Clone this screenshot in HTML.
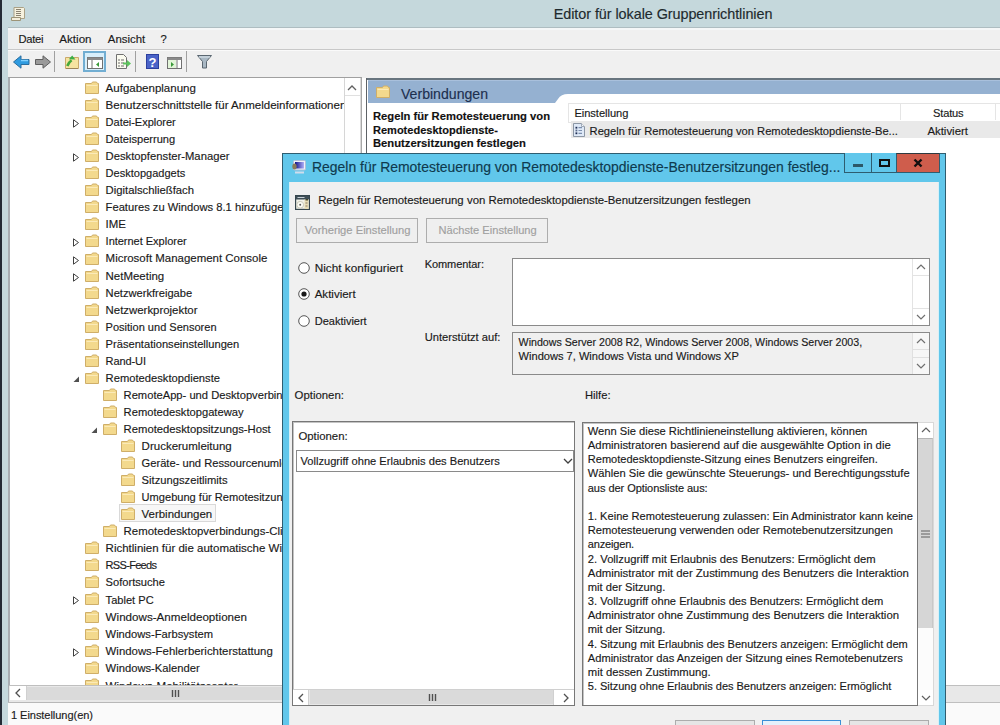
<!DOCTYPE html>
<html><head><meta charset="utf-8"><style>
html,body{margin:0;padding:0;width:1000px;height:725px;overflow:hidden;position:relative;font-family:"Liberation Sans",sans-serif}
.t{position:absolute;white-space:nowrap;-webkit-text-stroke:0.15px currentColor}
svg{display:block}
</style></head><body>
<div style="position:absolute;left:0px;top:0px;width:1000px;height:725px;background:#c5d8dc"></div>
<div style="position:absolute;left:0px;top:0px;width:2px;height:725px;background:#242a35"></div>
<div style="position:absolute;left:2px;top:0px;width:6px;height:725px;background:#c5d8dd"></div>
<svg style="position:absolute;left:11px;top:7px;" width="14" height="14" viewBox="0 0 14 14"><path d="M3 0.5H12.5L13.5 1.5V11.5H3Z" fill="#f6f1de" stroke="#aaa186" stroke-width="1"/><path d="M5 2.5h5M5 4.5h5M5 6.5h5M5 8.5h5" stroke="#8a8270" stroke-width="1"/><path d="M0.5 10.5H9.5V13.5H0.5Z" fill="#f3eddb" stroke="#9c9478" stroke-width="1"/></svg>
<div class="t" style="left:553.75px;top:7.00px;font-size:14.4px;line-height:14.4px;color:#1e2a2e;font-weight:normal;letter-spacing:-0.060px;">Editor für lokale Gruppenrichtlinien</div>
<div style="position:absolute;left:8px;top:27px;width:992px;height:698px;background:#f0f0f0"></div>
<div style="position:absolute;left:8px;top:27px;width:992px;height:1px;background:#aebdc1"></div>
<div style="position:absolute;left:8px;top:28px;width:992px;height:2px;background:#f5f7f8"></div>
<div class="t" style="left:18.50px;top:34.00px;font-size:11.23px;line-height:11.23px;color:#1a1a1a;font-weight:normal;letter-spacing:-0.303px;">Datei</div>
<div class="t" style="left:59.30px;top:33.00px;font-size:11.62px;line-height:11.62px;color:#1a1a1a;font-weight:normal;letter-spacing:0.001px;">Aktion</div>
<div class="t" style="left:107.80px;top:34.00px;font-size:11.41px;line-height:11.41px;color:#1a1a1a;font-weight:normal;letter-spacing:-0.002px;">Ansicht</div>
<div class="t" style="left:160.50px;top:34.00px;font-size:11.23px;line-height:11.23px;color:#1a1a1a;font-weight:normal;letter-spacing:-0.745px;">?</div>
<div style="position:absolute;left:8px;top:49px;width:992px;height:1px;background:#c8c8c8"></div>
<div style="position:absolute;left:8px;top:50px;width:992px;height:1px;background:#fafafa"></div>
<svg style="position:absolute;left:13px;top:55px;" width="17" height="14" viewBox="0 0 17 14"><path d="M0.5 7L8 0.8V4.5H16V9.5H8V13.2Z" fill="#2f9be0" stroke="#2a6d9e" stroke-width="1"/><path d="M8 5.5H15" stroke="#7fd0ff" stroke-width="1.5"/></svg>
<svg style="position:absolute;left:35px;top:55px;" width="16" height="14" viewBox="0 0 16 14"><path d="M15.5 7L8 0.8V4.5H0.5V9.5H8V13.2Z" fill="#9a9a9a" stroke="#5f5f5f" stroke-width="1"/></svg>
<div style="position:absolute;left:54px;top:51px;width:1px;height:21px;background:#a0a0a0"></div>
<svg style="position:absolute;left:65px;top:55px;" width="14" height="14" viewBox="0 0 14 14"><path d="M0.5 2.5h13v11h-13z" fill="#f6e3a0" stroke="#c9a96a"/><path d="M1 13.5h12" stroke="#9c8458"/><path d="M2.3 11C3.2 8.3 4.6 6.6 6.6 5.2" stroke="#45a83a" stroke-width="2.6" fill="none"/><path d="M3.8 4.2L7.2 0.4L10.4 4.6Z" fill="#3cae46"/></svg>
<div style="position:absolute;left:83px;top:51px;width:23px;height:21px;background:#d8effb;border:2px solid #72aed2;box-sizing:border-box"></div>
<svg style="position:absolute;left:87px;top:57px;" width="16" height="12" viewBox="0 0 16 12"><rect x="0.5" y="0.5" width="15" height="11" fill="#fff" stroke="#707070"/><rect x="0.5" y="0.5" width="15" height="2.5" fill="#8a8a8a"/><path d="M5 3v8.5" stroke="#707070"/><path d="M12 5L9 7.5L12 10Z" fill="#3a9a3a"/></svg>
<svg style="position:absolute;left:116px;top:54px;" width="16" height="15" viewBox="0 0 16 15"><path d="M0.5 0.5h7l3 3v11h-10z" fill="#fbfbf0" stroke="#707070"/><path d="M2 6h2M5 6h3M2 9h2M5 9h3M2 12h2M5 12h3" stroke="#6a6a6a" stroke-width="1.2"/><path d="M7 8.5h4V6l4 3.5-4 3.5v-2.5H7z" fill="#5cc45c"/></svg>
<div style="position:absolute;left:135px;top:51px;width:1px;height:21px;background:#a0a0a0"></div>
<svg style="position:absolute;left:146px;top:54px;" width="13" height="15" viewBox="0 0 13 15"><rect x="0" y="0" width="13" height="15" fill="#2b3f9e"/><rect x="1" y="1" width="11" height="13" fill="#4a63c8"/><text x="6.5" y="12.5" font-family="Liberation Sans" font-weight="bold" font-size="13" fill="#fff" text-anchor="middle">?</text></svg>
<svg style="position:absolute;left:167px;top:57px;" width="15" height="12" viewBox="0 0 15 12"><rect x="0.5" y="0.5" width="14" height="11" fill="#fff" stroke="#707070"/><rect x="0.5" y="0.5" width="14" height="2.5" fill="#8a8a8a"/><rect x="1" y="3" width="8" height="8" fill="#e2f5d8"/><path d="M10 3v8.5" stroke="#707070"/><path d="M4 5L7 7.5L4 10Z" fill="#3a9a3a"/></svg>
<div style="position:absolute;left:186px;top:51px;width:1px;height:21px;background:#a0a0a0"></div>
<svg style="position:absolute;left:197px;top:55px;" width="15" height="14" viewBox="0 0 15 14"><path d="M0.5 0.5h14l-5 6v6.5h-4V6.5z" fill="#a9b8c4" stroke="#5a6670"/><path d="M2 2h11" stroke="#dde7ee"/></svg>
<div style="position:absolute;left:8px;top:77px;width:354px;height:626px;background:#fff;border-top:1px solid #a0a0a0;border-left:2px solid #a9adb3;border-right:1px solid #a8a8a8;box-sizing:border-box"></div>
<div style="position:absolute;left:360px;top:78px;width:1px;height:607px;background:#dadada"></div>
<div style="position:absolute;left:362px;top:78px;width:4px;height:625px;background:#fff"></div>
<div style="position:absolute;left:9px;top:78px;width:335px;height:607px;overflow:hidden">
<svg style="position:absolute;left:76px;top:3px;" width="14" height="13" viewBox="0 0 14 13"><path d="M0.5 2.5h6l1-1.5h4l1 1.5h1v10h-13z" fill="#f3d98d" stroke="#cfae68" stroke-width="1"/><path d="M1.5 4.5h11" stroke="#fbeab8" stroke-width="1"/></svg>
<div class="t" style="left:96.60px;top:5.00px;font-size:11.52px;line-height:11.52px;color:#1a1a1a;font-weight:normal;letter-spacing:-0.001px;">Aufgabenplanung</div>
<svg style="position:absolute;left:76px;top:20px;" width="14" height="13" viewBox="0 0 14 13"><path d="M0.5 2.5h6l1-1.5h4l1 1.5h1v10h-13z" fill="#f3d98d" stroke="#cfae68" stroke-width="1"/><path d="M1.5 4.5h11" stroke="#fbeab8" stroke-width="1"/></svg>
<div class="t" style="left:96.60px;top:22.00px;font-size:11.53px;line-height:11.53px;color:#1a1a1a;font-weight:normal;letter-spacing:0.001px;">Benutzerschnittstelle für Anmeldeinformationen</div>
<svg style="position:absolute;left:76px;top:37px;" width="14" height="13" viewBox="0 0 14 13"><path d="M0.5 2.5h6l1-1.5h4l1 1.5h1v10h-13z" fill="#f3d98d" stroke="#cfae68" stroke-width="1"/><path d="M1.5 4.5h11" stroke="#fbeab8" stroke-width="1"/></svg>
<svg style="position:absolute;left:64px;top:41px;" width="7" height="9" viewBox="0 0 7 9"><path d="M0.5 0.8L5.5 4.5L0.5 8.2Z" fill="#fff" stroke="#404040" stroke-width="1"/></svg>
<div class="t" style="left:96.60px;top:39.00px;font-size:11.04px;line-height:11.04px;color:#1a1a1a;font-weight:normal;letter-spacing:-0.032px;">Datei-Explorer</div>
<svg style="position:absolute;left:76px;top:54px;" width="14" height="13" viewBox="0 0 14 13"><path d="M0.5 2.5h6l1-1.5h4l1 1.5h1v10h-13z" fill="#f3d98d" stroke="#cfae68" stroke-width="1"/><path d="M1.5 4.5h11" stroke="#fbeab8" stroke-width="1"/></svg>
<div class="t" style="left:96.60px;top:56.00px;font-size:11.08px;line-height:11.08px;color:#1a1a1a;font-weight:normal;letter-spacing:0.001px;">Dateisperrung</div>
<svg style="position:absolute;left:76px;top:71px;" width="14" height="13" viewBox="0 0 14 13"><path d="M0.5 2.5h6l1-1.5h4l1 1.5h1v10h-13z" fill="#f3d98d" stroke="#cfae68" stroke-width="1"/><path d="M1.5 4.5h11" stroke="#fbeab8" stroke-width="1"/></svg>
<svg style="position:absolute;left:64px;top:75px;" width="7" height="9" viewBox="0 0 7 9"><path d="M0.5 0.8L5.5 4.5L0.5 8.2Z" fill="#fff" stroke="#404040" stroke-width="1"/></svg>
<div class="t" style="left:96.60px;top:73.00px;font-size:11.25px;line-height:11.25px;color:#1a1a1a;font-weight:normal;letter-spacing:-0.000px;">Desktopfenster-Manager</div>
<svg style="position:absolute;left:76px;top:88px;" width="14" height="13" viewBox="0 0 14 13"><path d="M0.5 2.5h6l1-1.5h4l1 1.5h1v10h-13z" fill="#f3d98d" stroke="#cfae68" stroke-width="1"/><path d="M1.5 4.5h11" stroke="#fbeab8" stroke-width="1"/></svg>
<div class="t" style="left:96.60px;top:90.00px;font-size:11.04px;line-height:11.04px;color:#1a1a1a;font-weight:normal;letter-spacing:0.001px;">Desktopgadgets</div>
<svg style="position:absolute;left:76px;top:105px;" width="14" height="13" viewBox="0 0 14 13"><path d="M0.5 2.5h6l1-1.5h4l1 1.5h1v10h-13z" fill="#f3d98d" stroke="#cfae68" stroke-width="1"/><path d="M1.5 4.5h11" stroke="#fbeab8" stroke-width="1"/></svg>
<div class="t" style="left:96.60px;top:107.00px;font-size:11.29px;line-height:11.29px;color:#1a1a1a;font-weight:normal;letter-spacing:0.002px;">Digitalschließfach</div>
<svg style="position:absolute;left:76px;top:122px;" width="14" height="13" viewBox="0 0 14 13"><path d="M0.5 2.5h6l1-1.5h4l1 1.5h1v10h-13z" fill="#f3d98d" stroke="#cfae68" stroke-width="1"/><path d="M1.5 4.5h11" stroke="#fbeab8" stroke-width="1"/></svg>
<div class="t" style="left:96.60px;top:124.00px;font-size:11.2px;line-height:11.2px;color:#1a1a1a;font-weight:normal;letter-spacing:0.000px;">Features zu Windows 8.1 hinzufügen</div>
<svg style="position:absolute;left:76px;top:139px;" width="14" height="13" viewBox="0 0 14 13"><path d="M0.5 2.5h6l1-1.5h4l1 1.5h1v10h-13z" fill="#f3d98d" stroke="#cfae68" stroke-width="1"/><path d="M1.5 4.5h11" stroke="#fbeab8" stroke-width="1"/></svg>
<div class="t" style="left:96.60px;top:141.00px;font-size:11.45px;line-height:11.45px;color:#1a1a1a;font-weight:normal;">IME</div>
<svg style="position:absolute;left:76px;top:156px;" width="14" height="13" viewBox="0 0 14 13"><path d="M0.5 2.5h6l1-1.5h4l1 1.5h1v10h-13z" fill="#f3d98d" stroke="#cfae68" stroke-width="1"/><path d="M1.5 4.5h11" stroke="#fbeab8" stroke-width="1"/></svg>
<svg style="position:absolute;left:64px;top:160px;" width="7" height="9" viewBox="0 0 7 9"><path d="M0.5 0.8L5.5 4.5L0.5 8.2Z" fill="#fff" stroke="#404040" stroke-width="1"/></svg>
<div class="t" style="left:96.60px;top:158.00px;font-size:11.04px;line-height:11.04px;color:#1a1a1a;font-weight:normal;letter-spacing:-0.030px;">Internet Explorer</div>
<svg style="position:absolute;left:76px;top:174px;" width="14" height="13" viewBox="0 0 14 13"><path d="M0.5 2.5h6l1-1.5h4l1 1.5h1v10h-13z" fill="#f3d98d" stroke="#cfae68" stroke-width="1"/><path d="M1.5 4.5h11" stroke="#fbeab8" stroke-width="1"/></svg>
<svg style="position:absolute;left:64px;top:178px;" width="7" height="9" viewBox="0 0 7 9"><path d="M0.5 0.8L5.5 4.5L0.5 8.2Z" fill="#fff" stroke="#404040" stroke-width="1"/></svg>
<div class="t" style="left:96.60px;top:175.00px;font-size:11.46px;line-height:11.46px;color:#1a1a1a;font-weight:normal;letter-spacing:0.001px;">Microsoft Management Console</div>
<svg style="position:absolute;left:76px;top:191px;" width="14" height="13" viewBox="0 0 14 13"><path d="M0.5 2.5h6l1-1.5h4l1 1.5h1v10h-13z" fill="#f3d98d" stroke="#cfae68" stroke-width="1"/><path d="M1.5 4.5h11" stroke="#fbeab8" stroke-width="1"/></svg>
<svg style="position:absolute;left:64px;top:195px;" width="7" height="9" viewBox="0 0 7 9"><path d="M0.5 0.8L5.5 4.5L0.5 8.2Z" fill="#fff" stroke="#404040" stroke-width="1"/></svg>
<div class="t" style="left:96.60px;top:193.00px;font-size:11.46px;line-height:11.46px;color:#1a1a1a;font-weight:normal;letter-spacing:0.000px;">NetMeeting</div>
<svg style="position:absolute;left:76px;top:208px;" width="14" height="13" viewBox="0 0 14 13"><path d="M0.5 2.5h6l1-1.5h4l1 1.5h1v10h-13z" fill="#f3d98d" stroke="#cfae68" stroke-width="1"/><path d="M1.5 4.5h11" stroke="#fbeab8" stroke-width="1"/></svg>
<div class="t" style="left:96.60px;top:210.00px;font-size:11.13px;line-height:11.13px;color:#1a1a1a;font-weight:normal;letter-spacing:-0.000px;">Netzwerkfreigabe</div>
<svg style="position:absolute;left:76px;top:225px;" width="14" height="13" viewBox="0 0 14 13"><path d="M0.5 2.5h6l1-1.5h4l1 1.5h1v10h-13z" fill="#f3d98d" stroke="#cfae68" stroke-width="1"/><path d="M1.5 4.5h11" stroke="#fbeab8" stroke-width="1"/></svg>
<div class="t" style="left:96.60px;top:227.00px;font-size:11.41px;line-height:11.41px;color:#1a1a1a;font-weight:normal;letter-spacing:-0.002px;">Netzwerkprojektor</div>
<svg style="position:absolute;left:76px;top:242px;" width="14" height="13" viewBox="0 0 14 13"><path d="M0.5 2.5h6l1-1.5h4l1 1.5h1v10h-13z" fill="#f3d98d" stroke="#cfae68" stroke-width="1"/><path d="M1.5 4.5h11" stroke="#fbeab8" stroke-width="1"/></svg>
<div class="t" style="left:96.60px;top:244.00px;font-size:11.04px;line-height:11.04px;color:#1a1a1a;font-weight:normal;letter-spacing:-0.004px;">Position und Sensoren</div>
<svg style="position:absolute;left:76px;top:259px;" width="14" height="13" viewBox="0 0 14 13"><path d="M0.5 2.5h6l1-1.5h4l1 1.5h1v10h-13z" fill="#f3d98d" stroke="#cfae68" stroke-width="1"/><path d="M1.5 4.5h11" stroke="#fbeab8" stroke-width="1"/></svg>
<div class="t" style="left:96.60px;top:261.00px;font-size:11.14px;line-height:11.14px;color:#1a1a1a;font-weight:normal;letter-spacing:0.001px;">Präsentationseinstellungen</div>
<svg style="position:absolute;left:76px;top:276px;" width="14" height="13" viewBox="0 0 14 13"><path d="M0.5 2.5h6l1-1.5h4l1 1.5h1v10h-13z" fill="#f3d98d" stroke="#cfae68" stroke-width="1"/><path d="M1.5 4.5h11" stroke="#fbeab8" stroke-width="1"/></svg>
<div class="t" style="left:96.60px;top:278.00px;font-size:11.04px;line-height:11.04px;color:#1a1a1a;font-weight:normal;letter-spacing:-0.115px;">Rand-UI</div>
<svg style="position:absolute;left:76px;top:293px;" width="14" height="13" viewBox="0 0 14 13"><path d="M0.5 2.5h6l1-1.5h4l1 1.5h1v10h-13z" fill="#f3d98d" stroke="#cfae68" stroke-width="1"/><path d="M1.5 4.5h11" stroke="#fbeab8" stroke-width="1"/></svg>
<svg style="position:absolute;left:64px;top:298px;" width="7" height="7" viewBox="0 0 7 7"><path d="M6 0.5V6H0.5Z" fill="#505050"/></svg>
<div class="t" style="left:96.60px;top:295.00px;font-size:11.19px;line-height:11.19px;color:#1a1a1a;font-weight:normal;letter-spacing:-0.002px;">Remotedesktopdienste</div>
<svg style="position:absolute;left:94px;top:310px;" width="14" height="13" viewBox="0 0 14 13"><path d="M0.5 2.5h6l1-1.5h4l1 1.5h1v10h-13z" fill="#f3d98d" stroke="#cfae68" stroke-width="1"/><path d="M1.5 4.5h11" stroke="#fbeab8" stroke-width="1"/></svg>
<div class="t" style="left:114.60px;top:312.00px;font-size:11.18px;line-height:11.18px;color:#1a1a1a;font-weight:normal;letter-spacing:-0.001px;">RemoteApp- und Desktopverbindungen</div>
<svg style="position:absolute;left:94px;top:327px;" width="14" height="13" viewBox="0 0 14 13"><path d="M0.5 2.5h6l1-1.5h4l1 1.5h1v10h-13z" fill="#f3d98d" stroke="#cfae68" stroke-width="1"/><path d="M1.5 4.5h11" stroke="#fbeab8" stroke-width="1"/></svg>
<div class="t" style="left:114.60px;top:329.00px;font-size:11.19px;line-height:11.19px;color:#1a1a1a;font-weight:normal;letter-spacing:-0.002px;">Remotedesktopgateway</div>
<svg style="position:absolute;left:94px;top:344px;" width="14" height="13" viewBox="0 0 14 13"><path d="M0.5 2.5h6l1-1.5h4l1 1.5h1v10h-13z" fill="#f3d98d" stroke="#cfae68" stroke-width="1"/><path d="M1.5 4.5h11" stroke="#fbeab8" stroke-width="1"/></svg>
<svg style="position:absolute;left:82px;top:349px;" width="7" height="7" viewBox="0 0 7 7"><path d="M6 0.5V6H0.5Z" fill="#505050"/></svg>
<div class="t" style="left:114.60px;top:346.00px;font-size:11.28px;line-height:11.28px;color:#1a1a1a;font-weight:normal;letter-spacing:-0.001px;">Remotedesktopsitzungs-Host</div>
<svg style="position:absolute;left:112px;top:361px;" width="14" height="13" viewBox="0 0 14 13"><path d="M0.5 2.5h6l1-1.5h4l1 1.5h1v10h-13z" fill="#f3d98d" stroke="#cfae68" stroke-width="1"/><path d="M1.5 4.5h11" stroke="#fbeab8" stroke-width="1"/></svg>
<div class="t" style="left:132.60px;top:363.00px;font-size:11.51px;line-height:11.51px;color:#1a1a1a;font-weight:normal;letter-spacing:0.001px;">Druckerumleitung</div>
<svg style="position:absolute;left:112px;top:378px;" width="14" height="13" viewBox="0 0 14 13"><path d="M0.5 2.5h6l1-1.5h4l1 1.5h1v10h-13z" fill="#f3d98d" stroke="#cfae68" stroke-width="1"/><path d="M1.5 4.5h11" stroke="#fbeab8" stroke-width="1"/></svg>
<div class="t" style="left:132.60px;top:380.00px;font-size:11.15px;line-height:11.15px;color:#1a1a1a;font-weight:normal;letter-spacing:0.002px;">Geräte- und Ressourcenumleitung</div>
<svg style="position:absolute;left:112px;top:395px;" width="14" height="13" viewBox="0 0 14 13"><path d="M0.5 2.5h6l1-1.5h4l1 1.5h1v10h-13z" fill="#f3d98d" stroke="#cfae68" stroke-width="1"/><path d="M1.5 4.5h11" stroke="#fbeab8" stroke-width="1"/></svg>
<div class="t" style="left:132.60px;top:397.00px;font-size:11.21px;line-height:11.21px;color:#1a1a1a;font-weight:normal;letter-spacing:0.002px;">Sitzungszeitlimits</div>
<svg style="position:absolute;left:112px;top:412px;" width="14" height="13" viewBox="0 0 14 13"><path d="M0.5 2.5h6l1-1.5h4l1 1.5h1v10h-13z" fill="#f3d98d" stroke="#cfae68" stroke-width="1"/><path d="M1.5 4.5h11" stroke="#fbeab8" stroke-width="1"/></svg>
<div class="t" style="left:132.60px;top:414.00px;font-size:11.09px;line-height:11.09px;color:#1a1a1a;font-weight:normal;letter-spacing:-0.002px;">Umgebung für Remotesitzungen</div>
<div style="position:absolute;left:110px;top:426px;width:97px;height:18px;background:#f7f7f7;border:1px solid #d9d9d9;box-sizing:border-box"></div>
<svg style="position:absolute;left:112px;top:429px;" width="14" height="13" viewBox="0 0 14 13"><path d="M0.5 2.5h6l1-1.5h4l1 1.5h1v10h-13z" fill="#f3d98d" stroke="#cfae68" stroke-width="1"/><path d="M1.5 4.5h11" stroke="#fbeab8" stroke-width="1"/></svg>
<div class="t" style="left:132.60px;top:431.00px;font-size:11.44px;line-height:11.44px;color:#1a1a1a;font-weight:normal;letter-spacing:-0.001px;">Verbindungen</div>
<svg style="position:absolute;left:94px;top:446px;" width="14" height="13" viewBox="0 0 14 13"><path d="M0.5 2.5h6l1-1.5h4l1 1.5h1v10h-13z" fill="#f3d98d" stroke="#cfae68" stroke-width="1"/><path d="M1.5 4.5h11" stroke="#fbeab8" stroke-width="1"/></svg>
<div class="t" style="left:114.60px;top:448.00px;font-size:11.4px;line-height:11.4px;color:#1a1a1a;font-weight:normal;letter-spacing:-0.002px;">Remotedesktopverbindungs-Client</div>
<svg style="position:absolute;left:76px;top:463px;" width="14" height="13" viewBox="0 0 14 13"><path d="M0.5 2.5h6l1-1.5h4l1 1.5h1v10h-13z" fill="#f3d98d" stroke="#cfae68" stroke-width="1"/><path d="M1.5 4.5h11" stroke="#fbeab8" stroke-width="1"/></svg>
<div class="t" style="left:96.60px;top:465.00px;font-size:11.5px;line-height:11.5px;color:#1a1a1a;font-weight:normal;letter-spacing:0.000px;">Richtlinien für die automatische Wiedergabe</div>
<svg style="position:absolute;left:76px;top:480px;" width="14" height="13" viewBox="0 0 14 13"><path d="M0.5 2.5h6l1-1.5h4l1 1.5h1v10h-13z" fill="#f3d98d" stroke="#cfae68" stroke-width="1"/><path d="M1.5 4.5h11" stroke="#fbeab8" stroke-width="1"/></svg>
<div class="t" style="left:96.60px;top:482.00px;font-size:11.04px;line-height:11.04px;color:#1a1a1a;font-weight:normal;letter-spacing:-0.706px;">RSS-Feeds</div>
<svg style="position:absolute;left:76px;top:497px;" width="14" height="13" viewBox="0 0 14 13"><path d="M0.5 2.5h6l1-1.5h4l1 1.5h1v10h-13z" fill="#f3d98d" stroke="#cfae68" stroke-width="1"/><path d="M1.5 4.5h11" stroke="#fbeab8" stroke-width="1"/></svg>
<div class="t" style="left:96.60px;top:499.00px;font-size:11.13px;line-height:11.13px;color:#1a1a1a;font-weight:normal;letter-spacing:0.001px;">Sofortsuche</div>
<svg style="position:absolute;left:76px;top:514px;" width="14" height="13" viewBox="0 0 14 13"><path d="M0.5 2.5h6l1-1.5h4l1 1.5h1v10h-13z" fill="#f3d98d" stroke="#cfae68" stroke-width="1"/><path d="M1.5 4.5h11" stroke="#fbeab8" stroke-width="1"/></svg>
<svg style="position:absolute;left:64px;top:518px;" width="7" height="9" viewBox="0 0 7 9"><path d="M0.5 0.8L5.5 4.5L0.5 8.2Z" fill="#fff" stroke="#404040" stroke-width="1"/></svg>
<div class="t" style="left:96.60px;top:517.00px;font-size:11.09px;line-height:11.09px;color:#1a1a1a;font-weight:normal;letter-spacing:0.002px;">Tablet PC</div>
<svg style="position:absolute;left:76px;top:532px;" width="14" height="13" viewBox="0 0 14 13"><path d="M0.5 2.5h6l1-1.5h4l1 1.5h1v10h-13z" fill="#f3d98d" stroke="#cfae68" stroke-width="1"/><path d="M1.5 4.5h11" stroke="#fbeab8" stroke-width="1"/></svg>
<div class="t" style="left:96.60px;top:533.00px;font-size:11.62px;line-height:11.62px;color:#1a1a1a;font-weight:normal;letter-spacing:0.002px;">Windows-Anmeldeoptionen</div>
<svg style="position:absolute;left:76px;top:549px;" width="14" height="13" viewBox="0 0 14 13"><path d="M0.5 2.5h6l1-1.5h4l1 1.5h1v10h-13z" fill="#f3d98d" stroke="#cfae68" stroke-width="1"/><path d="M1.5 4.5h11" stroke="#fbeab8" stroke-width="1"/></svg>
<div class="t" style="left:96.60px;top:551.00px;font-size:11.18px;line-height:11.18px;color:#1a1a1a;font-weight:normal;letter-spacing:0.002px;">Windows-Farbsystem</div>
<svg style="position:absolute;left:76px;top:566px;" width="14" height="13" viewBox="0 0 14 13"><path d="M0.5 2.5h6l1-1.5h4l1 1.5h1v10h-13z" fill="#f3d98d" stroke="#cfae68" stroke-width="1"/><path d="M1.5 4.5h11" stroke="#fbeab8" stroke-width="1"/></svg>
<svg style="position:absolute;left:64px;top:570px;" width="7" height="9" viewBox="0 0 7 9"><path d="M0.5 0.8L5.5 4.5L0.5 8.2Z" fill="#fff" stroke="#404040" stroke-width="1"/></svg>
<div class="t" style="left:96.60px;top:568.00px;font-size:11.4px;line-height:11.4px;color:#1a1a1a;font-weight:normal;letter-spacing:0.001px;">Windows-Fehlerberichterstattung</div>
<svg style="position:absolute;left:76px;top:583px;" width="14" height="13" viewBox="0 0 14 13"><path d="M0.5 2.5h6l1-1.5h4l1 1.5h1v10h-13z" fill="#f3d98d" stroke="#cfae68" stroke-width="1"/><path d="M1.5 4.5h11" stroke="#fbeab8" stroke-width="1"/></svg>
<div class="t" style="left:96.60px;top:585.00px;font-size:11.22px;line-height:11.22px;color:#1a1a1a;font-weight:normal;letter-spacing:0.002px;">Windows-Kalender</div>
<svg style="position:absolute;left:76px;top:600px;" width="14" height="13" viewBox="0 0 14 13"><path d="M0.5 2.5h6l1-1.5h4l1 1.5h1v10h-13z" fill="#f3d98d" stroke="#cfae68" stroke-width="1"/><path d="M1.5 4.5h11" stroke="#fbeab8" stroke-width="1"/></svg>
<div class="t" style="left:96.60px;top:602.00px;font-size:11.6px;line-height:11.6px;color:#1a1a1a;font-weight:normal;letter-spacing:0.002px;">Windows-Mobilitätscenter</div>
</div>
<div style="position:absolute;left:344px;top:78px;width:16px;height:607px;background:#fff;border-left:1px solid #d6d6d6;box-sizing:border-box"></div>
<div style="position:absolute;left:345px;top:79px;width:15px;height:16px;background:#fff;border-bottom:1px solid #e0e0e0"></div>
<svg style="position:absolute;left:347px;top:84px;" width="10" height="8" viewBox="0 0 10 8"><path d="M1 6L5 2L9 6" stroke="#606060" stroke-width="1.3" fill="none"/></svg>
<div style="position:absolute;left:9px;top:685px;width:352px;height:16px;background:#e8e8e8;border-top:1px solid #bfbfbf;border-bottom:1px solid #bfbfbf"></div>
<div style="position:absolute;left:10px;top:686px;width:16px;height:14px;background:#fff;border-right:1px solid #d0d0d0"></div>
<svg style="position:absolute;left:14px;top:688px;" width="8" height="10" viewBox="0 0 8 10"><path d="M6 1L2 5L6 9" stroke="#505050" stroke-width="1.3" fill="none"/></svg>
<div style="position:absolute;left:27px;top:687px;width:334px;height:13px;background:#dadada"></div>
<svg style="position:absolute;left:171px;top:690px;" width="9" height="7" viewBox="0 0 9 7"><path d="M1.5 0v7M4.5 0v7M7.5 0v7" stroke="#505050" stroke-width="1.4"/></svg>
<div style="position:absolute;left:8px;top:702px;width:992px;height:1px;background:#b8b8b8"></div>
<div style="position:absolute;left:8px;top:703px;width:992px;height:22px;background:#fafafa"></div>
<div class="t" style="left:11.00px;top:710.00px;font-size:11.04px;line-height:11.04px;color:#1a1a1a;font-weight:normal;letter-spacing:-0.050px;">1 Einstellung(en)</div>
<div style="position:absolute;left:366px;top:78px;width:634px;height:625px;background:#fff"></div>
<div style="position:absolute;left:366px;top:78px;width:634px;height:2px;background:#68757f"></div>
<div style="position:absolute;left:366px;top:78px;width:1px;height:625px;background:#5e6266"></div>
<svg style="position:absolute;left:368px;top:80px;" width="632" height="24" viewBox="0 0 632 24"><path d="M0 0H632V14H200Q193 14 190 19L187 23H0Z" fill="#95b1d1"/><path d="M0 0.5H632" stroke="#a9c0dc"/></svg>
<svg style="position:absolute;left:376px;top:85px;" width="14" height="13" viewBox="0 0 14 13"><path d="M0.5 2.5h6l1-1.5h4l1 1.5h1v10h-13z" fill="#f3d98d" stroke="#cfae68" stroke-width="1"/><path d="M1.5 4.5h11" stroke="#fbeab8" stroke-width="1"/></svg>
<div class="t" style="left:401.00px;top:87.00px;font-size:14.1px;line-height:14.1px;color:#1d2f4f;font-weight:normal;">Verbindungen</div>
<div class="t" style="left:373.00px;top:111.00px;font-size:11.22px;line-height:11.22px;color:#111;font-weight:bold;letter-spacing:-0.001px;">Regeln für Remotesteuerung von</div>
<div class="t" style="left:373.00px;top:125.00px;font-size:11.04px;line-height:11.04px;color:#111;font-weight:bold;letter-spacing:-0.006px;">Remotedesktopdienste-</div>
<div class="t" style="left:373.00px;top:138.00px;font-size:11.24px;line-height:11.24px;color:#111;font-weight:bold;letter-spacing:0.000px;">Benutzersitzungen festlegen</div>
<div style="position:absolute;left:568px;top:103px;width:432px;height:18px;background:#fff;border-top:1px solid #e5e5e5;border-bottom:1px solid #e5e5e5;border-left:1px solid #e5e5e5"></div>
<div style="position:absolute;left:900px;top:104px;width:1px;height:16px;background:#e5e5e5"></div>
<div style="position:absolute;left:995px;top:104px;width:1px;height:16px;background:#e5e5e5"></div>
<div class="t" style="left:574.40px;top:108.00px;font-size:11.14px;line-height:11.14px;color:#1a1a1a;font-weight:normal;letter-spacing:-0.045px;">Einstellung</div>
<div class="t" style="left:933.00px;top:108.00px;font-size:11.14px;line-height:11.14px;color:#1a1a1a;font-weight:normal;letter-spacing:-0.180px;">Status</div>
<div style="position:absolute;left:571px;top:121px;width:429px;height:17px;background:#e9e9e9"></div>
<svg style="position:absolute;left:573px;top:123px;" width="12" height="14" viewBox="0 0 12 14"><path d="M0.5 0.5h8l3 3v10h-11z" fill="#dfe9f7" stroke="#8c97a5"/><path d="M8.5 0.5v3h3" fill="#f4f8fc" stroke="#a0aab8"/><rect x="2.5" y="3.8" width="1.8" height="1.8" fill="#1c2c52"/><rect x="2.5" y="6.6" width="1.8" height="1.8" fill="#5a6a88"/><rect x="2.5" y="9.4" width="1.8" height="1.8" fill="#1c2c52"/><path d="M5.5 4.7h3.5M5.5 7.5h3.5M5.5 10.3h3.5" stroke="#7b8fae" stroke-width="1.2"/></svg>
<div class="t" style="left:589.60px;top:126.00px;font-size:11.16px;line-height:11.16px;color:#1a1a1a;font-weight:normal;letter-spacing:0.002px;">Regeln für Remotesteuerung von Remotedesktopdienste-Be...</div>
<div class="t" style="left:927.40px;top:126.00px;font-size:11.42px;line-height:11.42px;color:#1a1a1a;font-weight:normal;letter-spacing:-0.001px;">Aktiviert</div>
<div style="position:absolute;left:946px;top:685px;width:54px;height:18px;background:#e8e8e8;border-top:1px solid #bfbfbf;border-bottom:1px solid #bfbfbf;box-sizing:border-box"></div>
<div style="position:absolute;left:282px;top:153px;width:664px;height:572px;background:#61c7eb;border:1px solid #2e5d70;border-bottom:none;box-sizing:border-box"></div>
<svg style="position:absolute;left:292px;top:160px;" width="14" height="14" viewBox="0 0 14 14"><defs><linearGradient id="scr" x1="0" x2="1"><stop offset="0" stop-color="#10108a"/><stop offset="1" stop-color="#b0b0f8"/></linearGradient></defs><rect x="1.5" y="0.5" width="12" height="9.5" rx="1" fill="#eef2fa" stroke="#b0c0d8"/><rect x="3" y="2" width="9" height="6.5" fill="url(#scr)"/><path d="M3 12.5h9" stroke="#d0dcec" stroke-width="2"/><ellipse cx="2.5" cy="6.5" rx="2.2" ry="3" fill="#8a7a5a"/></svg>
<div class="t" style="left:312.00px;top:161.00px;font-size:13.95px;line-height:13.95px;color:#0f3a4e;font-weight:normal;letter-spacing:-0.000px;">Regeln für Remotesteuerung von Remotedesktopdienste-Benutzersitzungen festleg...</div>
<div style="position:absolute;left:844px;top:153px;width:28px;height:20px;background:#61c7eb;border-left:1px solid #2e5d70;border-bottom:1px solid #2e5d70;box-sizing:border-box"></div>
<div style="position:absolute;left:871px;top:153px;width:26px;height:20px;background:#61c7eb;border-left:1px solid #2e5d70;border-bottom:1px solid #2e5d70;box-sizing:border-box"></div>
<div style="position:absolute;left:896px;top:153px;width:44px;height:20px;background:#cf5d4c;border-left:1px solid #2e5d70;border-top:1px solid #2e3a40;border-bottom:1px solid #2e5d70;border-right:1px solid #2e5d70;box-sizing:border-box"></div>
<div style="position:absolute;left:853px;top:164px;width:10px;height:3px;background:#2c5868"></div>
<div style="position:absolute;left:879px;top:159px;width:11px;height:8px;border:2px solid #111;box-sizing:border-box"></div>
<svg style="position:absolute;left:913px;top:158px;" width="10" height="10" viewBox="0 0 10 10"><path d="M1.5 1.5L8.5 8.5M8.5 1.5L1.5 8.5" stroke="#141010" stroke-width="2.4"/></svg>
<div style="position:absolute;left:289px;top:182px;width:650px;height:543px;background:#f0f0f0"></div>
<div style="position:absolute;left:289px;top:182px;width:1px;height:543px;background:#d6f0f7"></div>
<div style="position:absolute;left:938px;top:182px;width:1px;height:543px;background:#d6f0f7"></div>
<svg style="position:absolute;left:295px;top:195px;" width="15" height="15" viewBox="0 0 15 15"><rect x="0.6" y="0.6" width="13.8" height="13.8" fill="#f2f2ea" stroke="#36464e" stroke-width="1.2"/><rect x="1" y="1" width="13" height="3.5" fill="#3e4e56"/><path d="M2.5 2.5h7" stroke="#c8d0d8" stroke-width="1"/><rect x="9.5" y="4.5" width="4" height="9.5" fill="#e6dcb4"/><path d="M10.5 4.8h2.5" stroke="#2a2a10" stroke-width="1.2"/><circle cx="5.2" cy="9.8" r="3.4" fill="#fbfbf4" stroke="#c8c8b8"/><circle cx="5.2" cy="9.8" r="1" fill="#5a5a5a"/><path d="M10.5 8h2M10.5 11h2" stroke="#8a7a6a"/></svg>
<div class="t" style="left:318.20px;top:195.00px;font-size:11.4px;line-height:11.4px;color:#1a1a1a;font-weight:normal;letter-spacing:-0.05px;word-spacing:0.24px">Regeln für Remotesteuerung von Remotedesktopdienste-Benutzersitzungen festlegen</div>
<div style="position:absolute;left:296px;top:218px;width:122px;height:25px;border:1px solid #adadad;box-sizing:border-box;background:#efefef"></div>
<div style="position:absolute;left:426px;top:218px;width:122px;height:25px;border:1px solid #adadad;box-sizing:border-box;background:#efefef"></div>
<div class="t" style="left:304.70px;top:225.00px;font-size:11.19px;line-height:11.19px;color:#a0a0a0;font-weight:normal;letter-spacing:-0.002px;">Vorherige Einstellung</div>
<div class="t" style="left:438.50px;top:225.00px;font-size:11.11px;line-height:11.11px;color:#a0a0a0;font-weight:normal;letter-spacing:0.001px;">Nächste Einstellung</div>
<svg style="position:absolute;left:298px;top:262px;" width="12" height="12" viewBox="0 0 12 12"><circle cx="6" cy="6" r="5.3" fill="#fff" stroke="#555" stroke-width="1"/></svg>
<div class="t" style="left:314.70px;top:262.00px;font-size:11.78px;line-height:11.78px;color:#1a1a1a;font-weight:normal;letter-spacing:0.001px;">Nicht konfiguriert</div>
<svg style="position:absolute;left:298px;top:288px;" width="12" height="12" viewBox="0 0 12 12"><circle cx="6" cy="6" r="5.3" fill="#fff" stroke="#555" stroke-width="1"/><circle cx="6" cy="6" r="2.6" fill="#1a1a1a"/></svg>
<div class="t" style="left:314.70px;top:289.00px;font-size:11.53px;line-height:11.53px;color:#1a1a1a;font-weight:normal;letter-spacing:-0.000px;">Aktiviert</div>
<svg style="position:absolute;left:298px;top:315px;" width="12" height="12" viewBox="0 0 12 12"><circle cx="6" cy="6" r="5.3" fill="#fff" stroke="#555" stroke-width="1"/></svg>
<div class="t" style="left:314.70px;top:316.00px;font-size:11.04px;line-height:11.04px;color:#1a1a1a;font-weight:normal;letter-spacing:-0.013px;">Deaktiviert</div>
<div class="t" style="left:424.70px;top:259.00px;font-size:11.04px;line-height:11.04px;color:#1a1a1a;font-weight:normal;letter-spacing:-0.082px;">Kommentar:</div>
<div class="t" style="left:424.70px;top:332.00px;font-size:11.18px;line-height:11.18px;color:#1a1a1a;font-weight:normal;letter-spacing:-0.000px;">Unterstützt auf:</div>
<div style="position:absolute;left:512px;top:258px;width:418px;height:68px;background:#fff;border:1px solid #8a8a8a;box-sizing:border-box"></div>
<div style="position:absolute;left:912px;top:259px;width:17px;height:66px;background:#fff;border-left:1px solid #e3e3e3;box-sizing:border-box"></div>
<div style="position:absolute;left:913px;top:259px;width:16px;height:17px;border-bottom:1px solid #e3e3e3;box-sizing:border-box"></div>
<div style="position:absolute;left:913px;top:308px;width:16px;height:17px;border-top:1px solid #e3e3e3;box-sizing:border-box"></div>
<svg style="position:absolute;left:916px;top:263px;" width="10" height="8" viewBox="0 0 10 8"><path d="M1 6L5 2L9 6" stroke="#707070" stroke-width="1.2" fill="none"/></svg>
<svg style="position:absolute;left:916px;top:313px;" width="10" height="8" viewBox="0 0 10 8"><path d="M1 2L5 6L9 2" stroke="#707070" stroke-width="1.2" fill="none"/></svg>
<div style="position:absolute;left:512px;top:332px;width:418px;height:43px;background:#f0f0f0;border:1px solid #8a8a8a;box-sizing:border-box"></div>
<div style="position:absolute;left:912px;top:333px;width:17px;height:41px;background:#f7f7f7;border-left:1px solid #e0e0e0;box-sizing:border-box"></div>
<div style="position:absolute;left:913px;top:333px;width:16px;height:17px;border-bottom:1px solid #e0e0e0;box-sizing:border-box"></div>
<div style="position:absolute;left:913px;top:357px;width:16px;height:17px;border-top:1px solid #e0e0e0;box-sizing:border-box"></div>
<svg style="position:absolute;left:916px;top:337px;" width="10" height="8" viewBox="0 0 10 8"><path d="M1 6L5 2L9 6" stroke="#707070" stroke-width="1.2" fill="none"/></svg>
<svg style="position:absolute;left:916px;top:362px;" width="10" height="8" viewBox="0 0 10 8"><path d="M1 2L5 6L9 2" stroke="#707070" stroke-width="1.2" fill="none"/></svg>
<div class="t" style="left:518.60px;top:337.00px;font-size:10.65px;line-height:10.65px;color:#1a1a1a;font-weight:normal;letter-spacing:-0.001px;">Windows Server 2008 R2, Windows Server 2008, Windows Server 2003,</div>
<div class="t" style="left:518.60px;top:351.00px;font-size:11.09px;line-height:11.09px;color:#1a1a1a;font-weight:normal;letter-spacing:-0.001px;">Windows 7, Windows Vista und Windows XP</div>
<div class="t" style="left:294.60px;top:390.00px;font-size:11.39px;line-height:11.39px;color:#1a1a1a;font-weight:normal;letter-spacing:0.001px;">Optionen:</div>
<div class="t" style="left:585.00px;top:390.00px;font-size:11.19px;line-height:11.19px;color:#1a1a1a;font-weight:normal;letter-spacing:0.001px;">Hilfe:</div>
<div style="position:absolute;left:292px;top:421px;width:283px;height:285px;background:#fff;border:1px solid #777;box-shadow:inset 1px 1px 0 #c4c4c4;box-sizing:border-box"></div>
<div class="t" style="left:298.40px;top:431.00px;font-size:11.37px;line-height:11.37px;color:#1a1a1a;font-weight:normal;letter-spacing:-0.000px;">Optionen:</div>
<div style="position:absolute;left:296px;top:450px;width:278px;height:22px;background:#fff;border:1px solid #8a8a8a;box-sizing:border-box"></div>
<div class="t" style="left:300.50px;top:456.00px;font-size:11.12px;line-height:11.12px;color:#1a1a1a;font-weight:normal;letter-spacing:-0.001px;">Vollzugriff ohne Erlaubnis des Benutzers</div>
<svg style="position:absolute;left:563px;top:457px;" width="10" height="8" viewBox="0 0 10 8"><path d="M1 2L5 6L9 2" stroke="#404040" stroke-width="1.3" fill="none"/></svg>
<div style="position:absolute;left:293px;top:689px;width:281px;height:16px;background:#e8e8e8;border-top:1px solid #d0d0d0;box-sizing:border-box"></div>
<div style="position:absolute;left:293px;top:690px;width:16px;height:15px;background:#fff;border-right:1px solid #d0d0d0;box-sizing:border-box"></div>
<div style="position:absolute;left:553px;top:690px;width:21px;height:15px;background:#fff;border-left:1px solid #d0d0d0;box-sizing:border-box"></div>
<div style="position:absolute;left:310px;top:690px;width:243px;height:14px;background:#dadada"></div>
<svg style="position:absolute;left:297px;top:693px;" width="8" height="10" viewBox="0 0 8 10"><path d="M6 1L2 5L6 9" stroke="#505050" stroke-width="1.3" fill="none"/></svg>
<svg style="position:absolute;left:562px;top:693px;" width="8" height="10" viewBox="0 0 8 10"><path d="M2 1L6 5L2 9" stroke="#505050" stroke-width="1.3" fill="none"/></svg>
<svg style="position:absolute;left:428px;top:694px;" width="9" height="7" viewBox="0 0 9 7"><path d="M1.5 0v7M4.5 0v7M7.5 0v7" stroke="#505050" stroke-width="1.4"/></svg>
<div style="position:absolute;left:582px;top:422px;width:336px;height:284px;background:#fff;border:1px solid #777;box-shadow:inset 1px 1px 0 #c4c4c4;box-sizing:border-box"></div>
<div style="position:absolute;left:918px;top:422px;width:16px;height:284px;background:#fcfcfc;border:1px solid #d8d8d8;border-left:none;box-sizing:border-box"></div>
<div style="position:absolute;left:918px;top:423px;width:15px;height:15px;background:#fff"></div>
<div style="position:absolute;left:918px;top:438px;width:15px;height:190px;background:#d6d6d6;border-top:1px solid #b4b4b4;border-right:1px solid #c8c8c8;box-sizing:border-box"></div>
<div style="position:absolute;left:918px;top:690px;width:15px;height:15px;background:#fff"></div>
<svg style="position:absolute;left:921px;top:426px;" width="10" height="8" viewBox="0 0 10 8"><path d="M1 6L5 2L9 6" stroke="#606060" stroke-width="1.2" fill="none"/></svg>
<svg style="position:absolute;left:921px;top:694px;" width="10" height="8" viewBox="0 0 10 8"><path d="M1 2L5 6L9 2" stroke="#606060" stroke-width="1.2" fill="none"/></svg>
<svg style="position:absolute;left:921px;top:530px;" width="9" height="8" viewBox="0 0 9 8"><path d="M0 1h9M0 4h9M0 7h9" stroke="#606060" stroke-width="1.2"/></svg>
<div class="t" style="left:587.80px;top:426.00px;font-size:11.17px;line-height:11.17px;color:#1a1a1a;font-weight:normal;letter-spacing:-0.000px;">Wenn Sie diese Richtlinieneinstellung aktivieren, können</div>
<div class="t" style="left:587.80px;top:440.00px;font-size:11.34px;line-height:11.34px;color:#1a1a1a;font-weight:normal;letter-spacing:0.000px;">Administratoren basierend auf die ausgewählte Option in die</div>
<div class="t" style="left:587.80px;top:454.00px;font-size:11.04px;line-height:11.04px;color:#1a1a1a;font-weight:normal;letter-spacing:-0.001px;">Remotedesktopdienste-Sitzung eines Benutzers eingreifen.</div>
<div class="t" style="left:587.80px;top:468.00px;font-size:11.17px;line-height:11.17px;color:#1a1a1a;font-weight:normal;letter-spacing:-0.001px;">Wählen Sie die gewünschte Steuerungs- und Berechtigungsstufe</div>
<div class="t" style="left:587.80px;top:483.00px;font-size:11.04px;line-height:11.04px;color:#1a1a1a;font-weight:normal;letter-spacing:-0.064px;">aus der Optionsliste aus:</div>
<div class="t" style="left:587.80px;top:511.00px;font-size:11.08px;line-height:11.08px;color:#1a1a1a;font-weight:normal;letter-spacing:0.000px;">1. Keine Remotesteuerung zulassen: Ein Administrator kann keine</div>
<div class="t" style="left:587.80px;top:525.00px;font-size:11.16px;line-height:11.16px;color:#1a1a1a;font-weight:normal;letter-spacing:-0.000px;">Remotesteuerung verwenden oder Remotebenutzersitzungen</div>
<div class="t" style="left:587.80px;top:539.00px;font-size:11.04px;line-height:11.04px;color:#1a1a1a;font-weight:normal;letter-spacing:-0.186px;">anzeigen.</div>
<div class="t" style="left:587.80px;top:554.00px;font-size:11.22px;line-height:11.22px;color:#1a1a1a;font-weight:normal;letter-spacing:-0.001px;">2. Vollzugriff mit Erlaubnis des Benutzers: Ermöglicht dem</div>
<div class="t" style="left:587.80px;top:568.00px;font-size:11.38px;line-height:11.38px;color:#1a1a1a;font-weight:normal;letter-spacing:-0.001px;">Administrator mit der Zustimmung des Benutzers die Interaktion</div>
<div class="t" style="left:587.80px;top:582.00px;font-size:11.16px;line-height:11.16px;color:#1a1a1a;font-weight:normal;letter-spacing:-0.002px;">mit der Sitzung.</div>
<div class="t" style="left:587.80px;top:596.00px;font-size:11.14px;line-height:11.14px;color:#1a1a1a;font-weight:normal;letter-spacing:0.001px;">3. Vollzugriff ohne Erlaubnis des Benutzers: Ermöglicht dem</div>
<div class="t" style="left:587.80px;top:610.00px;font-size:11.36px;line-height:11.36px;color:#1a1a1a;font-weight:normal;letter-spacing:-0.001px;">Administrator ohne Zustimmung des Benutzers die Interaktion</div>
<div class="t" style="left:587.80px;top:624.00px;font-size:11.16px;line-height:11.16px;color:#1a1a1a;font-weight:normal;letter-spacing:-0.002px;">mit der Sitzung.</div>
<div class="t" style="left:587.80px;top:639.00px;font-size:11.04px;line-height:11.04px;color:#1a1a1a;font-weight:normal;letter-spacing:-0.002px;">4. Sitzung mit Erlaubnis des Benutzers anzeigen: Ermöglicht dem</div>
<div class="t" style="left:587.80px;top:653.00px;font-size:11.12px;line-height:11.12px;color:#1a1a1a;font-weight:normal;letter-spacing:-0.000px;">Administrator das Anzeigen der Sitzung eines Remotebenutzers</div>
<div class="t" style="left:587.80px;top:667.00px;font-size:11.29px;line-height:11.29px;color:#1a1a1a;font-weight:normal;letter-spacing:0.001px;">mit dessen Zustimmung.</div>
<div class="t" style="left:587.80px;top:681.00px;font-size:11.04px;line-height:11.04px;color:#1a1a1a;font-weight:normal;letter-spacing:-0.030px;">5. Sitzung ohne Erlaubnis des Benutzers anzeigen: Ermöglicht</div>
<div style="position:absolute;left:675px;top:720px;width:80px;height:5px;background:#e5e5e5;border:1px solid #acacac;border-bottom:none;box-sizing:border-box"></div>
<div style="position:absolute;left:762px;top:720px;width:79px;height:5px;background:#e5f1fb;border:1px solid #3c8fd6;border-bottom:none;box-sizing:border-box"></div>
<div style="position:absolute;left:849px;top:720px;width:80px;height:5px;background:#e5e5e5;border:1px solid #acacac;border-bottom:none;box-sizing:border-box"></div>
</body></html>
